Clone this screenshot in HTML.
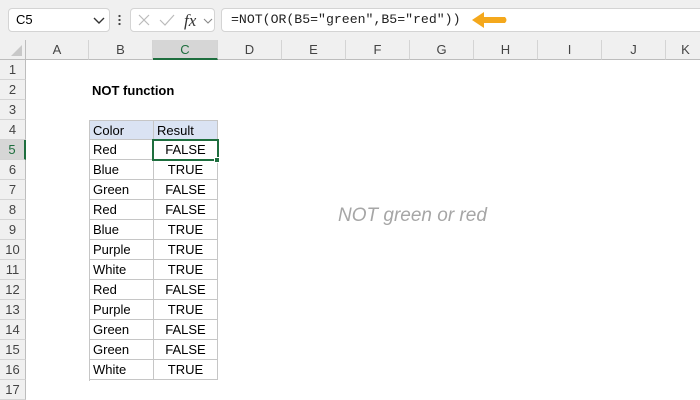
<!DOCTYPE html>
<html><head><style>
*{margin:0;padding:0;box-sizing:border-box}
body{width:700px;height:400px;overflow:hidden;background:#fff;font-family:"Liberation Sans",Calibri,sans-serif;position:relative;font-size:13px;color:#000}
.a{position:absolute}
.top{left:0;top:0;width:700px;height:40px;background:#f0f0f0}
.box{background:#fff;border:1px solid #d4d4d4;border-radius:4px}
.ch{top:40px;height:20px;background:#f0f0f0;border-right:1px solid #d4d4d4;border-bottom:1px solid #bdbdbd;text-align:center;line-height:20px;color:#444;font-size:13px}
.rh{left:0;width:26px;height:20px;background:#f0f0f0;border-bottom:1px solid #d4d4d4;border-right:1px solid #bdbdbd;text-align:center;line-height:20px;color:#444;font-size:13px}
.g{position:absolute;left:89px;top:120px;width:129px;height:261px;border-left:1px solid #c6c6c6;border-top:1px solid #c6c6c6}
.r{position:relative;height:20px;display:flex}
.r div{height:20px;line-height:19px;border-right:1px solid #c6c6c6;border-bottom:1px solid #c6c6c6;font-size:13px}
.r div:first-child{width:64px;padding-left:3px}
.r div:last-child{width:64px;text-align:center}
</style></head><body>
<div class="a top"></div>
<div class="a box" style="left:8px;top:8px;width:102px;height:24px;line-height:22px;padding-left:7px;font-size:13px">C5<svg class="a" style="left:84px;top:8px" width="12" height="8"><path d="M1 1 L6 6 L11 1" stroke="#333" stroke-width="1.4" fill="none"/></svg></div>
<div class="a" style="left:118px;top:14px;width:3px;height:12px;background:radial-gradient(circle,#444 1px,transparent 1.3px) 0 0/3px 4px"></div>
<div class="a box" style="left:130px;top:8px;width:85px;height:24px">
<svg class="a" style="left:7px;top:5px" width="12" height="12"><path d="M1 1L11 11M11 1L1 11" stroke="#bbb" stroke-width="1.2"/></svg>
<svg class="a" style="left:28px;top:5px" width="16" height="12"><path d="M1 6L6 11L15 1" stroke="#bbb" stroke-width="1.2" fill="none"/></svg>
<span class="a" style="left:53px;top:2px;font-family:'Liberation Serif',serif;font-style:italic;font-size:17px;color:#333">fx</span>
<svg class="a" style="left:72px;top:9px" width="10" height="7"><path d="M1 1L5 5L9 1" stroke="#888" stroke-width="1.1" fill="none"/></svg>
</div>
<div class="a box" style="left:221px;top:8px;width:485px;height:24px;line-height:22px;padding-left:9px;font-family:'Liberation Mono',monospace;font-size:13.2px;color:#222">=NOT(OR(B5="green",B5="red"))</div>
<svg class="a" style="left:470px;top:11px" width="40" height="18"><path d="M2 9L14 1L14 6L35 6Q38 9 35 12L14 12L14 17Z" fill="#f4a81c"/></svg>

<div class="a" style="left:0;top:40px;width:26px;height:20px;background:#f0f0f0;border-right:1px solid #bdbdbd;border-bottom:1px solid #bdbdbd"><svg class="a" style="left:10px;top:4px" width="13" height="13"><path d="M12 1L12 12L1 12Z" fill="#c8c8c8"/></svg></div>
<div class="a ch" style="left:26px;width:63px">A</div>
<div class="a ch" style="left:89px;width:64px">B</div>
<div class="a ch" style="left:153px;width:65px;background:#d6d6d6;color:#1e6e3e;border-bottom:2px solid #1e6e3e">C</div>
<div class="a ch" style="left:218px;width:64px">D</div>
<div class="a ch" style="left:282px;width:64px">E</div>
<div class="a ch" style="left:346px;width:64px">F</div>
<div class="a ch" style="left:410px;width:64px">G</div>
<div class="a ch" style="left:474px;width:64px">H</div>
<div class="a ch" style="left:538px;width:64px">I</div>
<div class="a ch" style="left:602px;width:64px">J</div>
<div class="a ch" style="left:666px;width:40px">K</div>

<div class="a rh" style="top:60px">1</div><div class="a rh" style="top:80px">2</div><div class="a rh" style="top:100px">3</div><div class="a rh" style="top:120px">4</div>
<div class="a rh" style="top:140px;background:#d6d6d6;color:#1e6e3e;border-right:2px solid #1e6e3e">5</div>
<div class="a rh" style="top:160px">6</div><div class="a rh" style="top:180px">7</div><div class="a rh" style="top:200px">8</div><div class="a rh" style="top:220px">9</div><div class="a rh" style="top:240px">10</div><div class="a rh" style="top:260px">11</div><div class="a rh" style="top:280px">12</div><div class="a rh" style="top:300px">13</div><div class="a rh" style="top:320px">14</div><div class="a rh" style="top:340px">15</div><div class="a rh" style="top:360px">16</div><div class="a rh" style="top:380px">17</div>

<div class="a" style="left:92px;top:83px;font-weight:bold;font-size:13px">NOT function</div>

<div class="g">
<div class="r" style="background:#dae3f3;height:19px"><div style="height:19px">Color</div><div style="height:19px;text-align:left;padding-left:3px">Result</div></div>
<div class="r"><div>Red</div><div>FALSE</div></div>
<div class="r"><div>Blue</div><div>TRUE</div></div>
<div class="r"><div>Green</div><div>FALSE</div></div>
<div class="r"><div>Red</div><div>FALSE</div></div>
<div class="r"><div>Blue</div><div>TRUE</div></div>
<div class="r"><div>Purple</div><div>TRUE</div></div>
<div class="r"><div>White</div><div>TRUE</div></div>
<div class="r"><div>Red</div><div>FALSE</div></div>
<div class="r"><div>Purple</div><div>TRUE</div></div>
<div class="r"><div>Green</div><div>FALSE</div></div>
<div class="r"><div>Green</div><div>FALSE</div></div>
<div class="r"><div>White</div><div>TRUE</div></div>
</div>
<div class="a" style="left:152px;top:139px;width:67px;height:22px;border:2px solid #1e6e3e"></div>
<div class="a" style="left:214px;top:157px;width:6px;height:6px;background:#1e6e3e;border:1px solid #fff"></div>

<div class="a" style="left:338px;top:205px;font-style:italic;font-size:19px;color:#a6a6a6">NOT green or red</div>
</body></html>
